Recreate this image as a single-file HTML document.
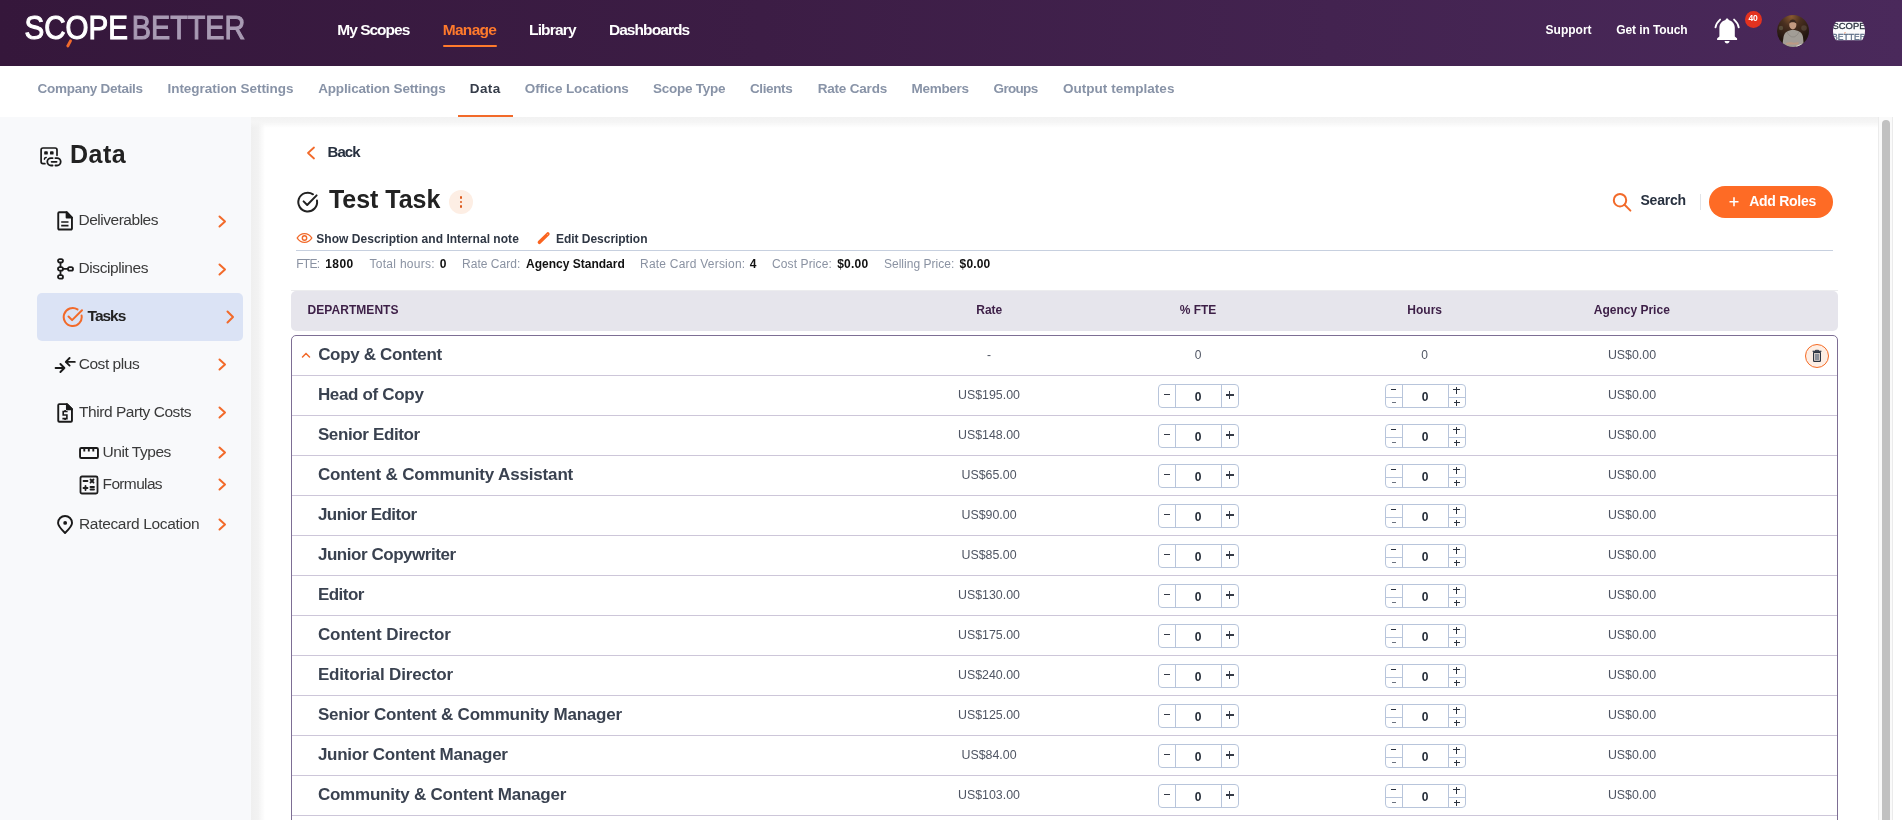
<!DOCTYPE html>
<html><head><meta charset="utf-8">
<style>
html,body{margin:0;padding:0;width:1902px;height:820px;overflow:hidden;background:#fff;font-family:"Liberation Sans",sans-serif;}
.t{position:absolute;line-height:1;white-space:nowrap;}
body{-webkit-font-smoothing:antialiased;}
#wrap{position:absolute;left:0;top:0;width:1902px;height:820px;will-change:transform;}
.abs{position:absolute;}
#hdr{position:absolute;left:0;top:0;width:1902px;height:66px;background:linear-gradient(90deg,#35173b 0%,#3c1d45 40%,#4a295b 100%);}
#sub{position:absolute;left:0;top:66px;width:1902px;height:51px;background:#fff;}
#side{position:absolute;left:0;top:117px;width:251px;height:703px;background:#f8f9fb;}
#shl{position:absolute;left:251px;top:117px;width:14px;height:703px;background:linear-gradient(90deg,#efefef 0px,#f2f2f2 7px,rgba(255,255,255,0) 14px);}
#sht{position:absolute;left:251px;top:117px;width:1627px;height:11px;background:linear-gradient(180deg,#f2f2f2 0px,#f5f5f5 5px,rgba(255,255,255,0) 11px);}
#track{position:absolute;left:1878px;top:117px;width:13px;height:703px;background:#fafafa;border-left:1px solid #ebebeb;border-right:1px solid #ebebeb;}
#thumb{position:absolute;left:1882px;top:120px;width:8px;height:710px;background:#c1c1c1;border-radius:4px;}
.rdiv{position:absolute;left:292px;width:1545px;height:1px;background:#cdc6d9;}
.step,.step2{position:absolute;width:79px;height:22px;border:1px solid #b8c5db;border-radius:4px;}
.step .c1,.step2 .c1{position:absolute;left:16px;top:0;width:1px;height:22px;background:#b8c5db;}
.step .c2{position:absolute;left:62px;top:0;width:1px;height:22px;background:#b8c5db;}
.step2 .c1{left:16px;}
.step2 .c2{position:absolute;left:62px;top:0;width:1px;height:22px;background:#b8c5db;}
.step2 .h1{position:absolute;left:0;top:12px;width:16px;height:1px;background:#b8c5db;}
.step2 .h2{position:absolute;left:63px;top:12px;width:16px;height:1px;background:#b8c5db;}
.mi{position:absolute;background:#2b3340;}
.pl{position:absolute;}
.pl::before,.pl::after{content:"";position:absolute;background:#2b3340;}
.step .mi{left:5px;top:9.1px;width:5.5px;height:1.3px;background:#353b47;}
.step .pl{left:67px;top:6px;width:8px;height:8px;}
.step .pl::before{left:0;top:3.4px;width:7.6px;height:1.2px;background:#353b47;}
.step .pl::after{left:3.2px;top:0;width:1.2px;height:8px;background:#353b47;}
.step2 .mi.a{left:5px;top:3.9px;width:5px;height:1.2px;}
.step2 .mi.b{left:6px;top:16.5px;width:4px;height:1px;background:#6b7280;}
.step2 .pl.a{left:67px;top:1.5px;width:7px;height:7px;}
.step2 .pl.b{left:67.5px;top:14.5px;width:6px;height:6px;}
.step2 .pl.a::before{left:0;top:2.9px;width:7px;height:1.1px;}
.step2 .pl.a::after{left:2.95px;top:0;width:1.1px;height:7.5px;}
.step2 .pl.b::before{left:0;top:2.5px;width:6px;height:1.1px;}
.step2 .pl.b::after{left:2.5px;top:0;width:1.1px;height:6px;}
</style></head>
<body><div id="wrap">
<div id="hdr"></div>
<!-- logo -->
<svg class="abs" style="left:0;top:0" width="260" height="66" viewBox="0 0 260 66">
  <text x="24.5" y="38.7" font-family="Liberation Sans" font-size="34" fill="#ffffff" stroke="#ffffff" stroke-width="1.1" textLength="103.6" lengthAdjust="spacingAndGlyphs">SCOPE</text>
  <text x="131.8" y="38.7" font-family="Liberation Sans" font-size="34" fill="#a99bb4" stroke="#a99bb4" stroke-width="1.1" textLength="113.5" lengthAdjust="spacingAndGlyphs">BETTER</text>
  <rect x="63" y="38" width="6" height="3.5" fill="#36183c"/>
  <line x1="70.5" y1="40.8" x2="67.8" y2="46" stroke="#f26b2c" stroke-width="2.8" stroke-linecap="round"/>
</svg>
<!-- manage underline -->
<div class="abs" style="left:443px;top:44.5px;width:54px;height:2.5px;background:#ff7a2c;border-radius:1px"></div>
<!-- bell -->
<svg class="abs" style="left:1713px;top:16px" width="30" height="30" viewBox="0 0 30 30">
  <path d="M14.1 2.4c-0.9 0-1.5 0.6-1.6 1.5C9 4.8 6.5 7.6 6.4 11.6V20.4L4.3 22.2a0.9 0.9 0 0 0-0.2 0.6V24H24.1V22.8a0.9 0.9 0 0 0-0.2-0.6L21.8 20.4V11.6C21.7 7.6 19.2 4.8 15.7 3.9C15.6 3 15 2.4 14.1 2.4z" fill="#fff"/>
  <path d="M11.6 25.1h4.9c0 1.4-1.1 2.5-2.45 2.5s-2.45-1.1-2.45-2.5z" fill="#fff"/>
  <path d="M7.1 3.6C4.6 5.8 3 8.4 2.5 11.4" stroke="#fff" stroke-width="1.9" fill="none" stroke-linecap="round"/>
  <path d="M21.1 3.6c2.5 2.2 4.1 4.8 4.6 7.8" stroke="#fff" stroke-width="1.9" fill="none" stroke-linecap="round"/>
</svg>
<div class="abs" style="left:1744.5px;top:10.5px;width:17px;height:17px;border-radius:50%;background:#e3321f;"></div>
<div class="t" style="left:1744.5px;width:17px;text-align:center;top:14px;font-size:8.5px;font-weight:bold;color:#fff;letter-spacing:-0.3px">40</div>
<!-- avatar -->
<svg class="abs" style="left:1777px;top:14.8px" width="32" height="32" viewBox="0 0 32 32">
  <defs><clipPath id="av"><circle cx="16" cy="16" r="16"/></clipPath>
  <radialGradient id="avg" cx="45%" cy="5%" r="75%"><stop offset="0" stop-color="#8a5a30"/><stop offset="0.4" stop-color="#4a3020"/><stop offset="1" stop-color="#231610"/></radialGradient></defs>
  <g clip-path="url(#av)">
    <rect width="32" height="32" fill="url(#avg)"/>
    <circle cx="4" cy="13" r="2.2" fill="#7a7a60" opacity="0.45"/>
    <circle cx="27" cy="13" r="2.8" fill="#6a5a4a" opacity="0.5"/>
    <path d="M5 33 L6.5 22 C7.5 17 11 15 16 15 C21 15 25 17 26 22 L27 33z" fill="#a29d96"/>
    <path d="M10 17c1.5 3 3.5 5 6 5s4.5-2 6-5" stroke="#8d8882" stroke-width="0.8" fill="none"/>
    <ellipse cx="15.8" cy="9.8" rx="3.6" ry="4.6" fill="#c39a80"/>
    <path d="M12.2 8.6c0-2.7 1.6-4.2 3.6-4.2s3.6 1.5 3.6 4.2c-0.9-0.9-2.1-1.4-3.6-1.4s-2.7 0.5-3.6 1.4z" fill="#3a281e"/>
    <path d="M9 28c2-0.8 4.5-1 6.5-0.6s4 0.3 6-0.3v2.4h-12.5z" fill="#c29a80" opacity="0.85"/>
    <path d="M19 31l5.5-2.2 1.8 1.8-5.5 2.6z" fill="#e6e2da" opacity="0.9"/>
  </g>
</svg>
<!-- company logo -->
<svg class="abs" style="left:1833px;top:14.8px" width="32" height="32" viewBox="0 0 32 32">
  <defs><clipPath id="cl"><circle cx="16" cy="16" r="16"/></clipPath></defs>
  <g clip-path="url(#cl)">
    <rect x="0" y="6.8" width="32" height="18.4" fill="#fbfbfc"/>
    <text x="-0.5" y="14.2" font-family="Liberation Sans" font-size="8.8" fill="#2c3340" stroke="#2c3340" stroke-width="0.3" textLength="33" lengthAdjust="spacingAndGlyphs">SCOPE</text>
    <text x="-1" y="25" font-family="Liberation Sans" font-size="9.6" fill="#5d6e86" stroke="#5d6e86" stroke-width="0.3" textLength="34" lengthAdjust="spacingAndGlyphs">BETTER</text>
    <path d="M12.2 17.2l-0.6 1.2" stroke="#f26b2c" stroke-width="0.9"/>
  </g>
</svg>
<div id="sub"></div>
<div class="abs" style="left:458px;top:115px;width:55px;height:2px;background:#f26a2a"></div>

<div id="side"></div>
<div id="shl"></div>
<div id="sht"></div>
<div id="track"></div>
<div id="thumb"></div>

<!-- sidebar icons -->
<svg class="abs" style="left:36px;top:142px" width="30" height="28" viewBox="0 0 30 28" fill="none" stroke="#1a1a1a" stroke-width="1.7" stroke-linecap="round">
  <path d="M8.9 21.7H7a1.9 1.9 0 0 1-1.9-1.9V7.9A1.9 1.9 0 0 1 7 6h12.1A1.9 1.9 0 0 1 21 7.9v5.4"/>
  <rect x="8.2" y="9.2" width="3.6" height="3.4" rx="0.9" fill="#1a1a1a" stroke="none"/>
  <rect x="14" y="9.2" width="3.6" height="3.4" rx="0.9" fill="#1a1a1a" stroke="none"/>
  <path d="M10.2 15.6a1.8 1.8 0 0 0-1.8 1.6" stroke-width="1.5"/>
  <path d="M16.6 16.1H15a3.7 3.7 0 0 0 0 7.4h1.6M19.4 16.1H21a3.7 3.7 0 0 1 0 7.4h-1.6M15.6 19.8h5" stroke-width="1.8"/>
</svg>
<div class="abs" style="left:37px;top:293px;width:206px;height:48px;background:#dbe3f5;border-radius:5px"></div>
<!-- deliverables doc -->
<svg class="abs" style="left:55px;top:209px" width="20" height="24" viewBox="0 0 20 24" fill="none" stroke="#1a1a1a" stroke-width="1.9" stroke-linejoin="round">
  <path d="M4.3 3.25H11.6L16.95 8.6V19.5a1.05 1.05 0 0 1-1.05 1.05H4.3a1.05 1.05 0 0 1-1.05-1.05V4.3a1.05 1.05 0 0 1 1.05-1.05z"/>
  <path d="M11.6 3.25V8.6H16.95z" fill="#1a1a1a"/>
  <path d="M6.2 13H13.5M6.2 16.6H13.5" stroke-width="1.7"/>
</svg>
<!-- disciplines tree -->
<svg class="abs" style="left:55px;top:256px" width="22" height="24" viewBox="0 0 22 24" fill="none" stroke="#1a1a1a" stroke-width="1.8">
  <rect x="3" y="3.1" width="5" height="3.4" rx="1.7"/>
  <rect x="3" y="11.2" width="5" height="3.4" rx="1.7"/>
  <rect x="3" y="19.2" width="5" height="3.4" rx="1.7"/>
  <rect x="13" y="11.2" width="5" height="3.4" rx="1.7"/>
  <path d="M5.5 6.5v4.7M5.5 14.6v4.6M8 12.9h5"/>
</svg>
<!-- tasks check -->
<svg class="abs" style="left:62px;top:306px" width="22" height="22" viewBox="0 0 22 22" fill="none" stroke="#f26a2a" stroke-width="2" stroke-linecap="round" stroke-linejoin="round">
  <path d="M19.6 9.6A9 9 0 1 1 15.5 3.4"/>
  <path d="M6.5 10.5l3.6 3.6L20 4.2"/>
</svg>
<!-- cost plus arrows -->
<svg class="abs" style="left:54px;top:355px" width="22" height="20" viewBox="0 0 22 20" fill="none" stroke="#1a1a1a" stroke-width="1.9" stroke-linecap="round" stroke-linejoin="round">
  <path d="M1.6 13H10.4M6.4 9L10.4 13L6.4 17"/>
  <path d="M20.8 6.9H11.8M15.6 3L11.8 6.9L15.6 10.6"/>
</svg>
<!-- third party doc dollar -->
<svg class="abs" style="left:55px;top:401px" width="20" height="24" viewBox="0 0 20 24" fill="none" stroke="#1a1a1a" stroke-width="1.9" stroke-linejoin="round">
  <path d="M4.3 3.15H11.9L16.95 8.2V19.7a1.05 1.05 0 0 1-1.05 1.05H4.3a1.05 1.05 0 0 1-1.05-1.05V4.2a1.05 1.05 0 0 1 1.05-1.05z"/>
  <path d="M11.9 3.15V8.2H16.95z" fill="#1a1a1a"/>
  <path d="M12.6 10.5H8.2V14H11.9V17.6H7.4M10.1 9V10.5M10.1 17.6V19" stroke-width="1.6" stroke-linejoin="miter"/>
</svg>
<!-- unit types ruler -->
<svg class="abs" style="left:78px;top:445px" width="22" height="16" viewBox="0 0 22 16" fill="none" stroke="#1a1a1a" stroke-width="1.9">
  <rect x="2.05" y="3.05" width="17.9" height="9.9" rx="1.3"/>
  <path d="M6.3 3v3.6M10.8 3v3.6M15.3 3v3.6"/>
</svg>
<!-- formulas calc -->
<svg class="abs" style="left:79px;top:475px" width="20" height="20" viewBox="0 0 20 20" fill="none" stroke="#1e1e1e" stroke-width="1.8" stroke-linecap="round">
  <rect x="1.5" y="1.5" width="17" height="17" rx="1.5"/>
  <path d="M4.5 6h4M11.5 4.5l3 3M14.5 4.5l-3 3M4.5 13h4M6.5 11v4M11.5 12h3.5M11.5 14.5h3.5"/>
</svg>
<!-- ratecard location pin -->
<svg class="abs" style="left:55px;top:513px" width="20" height="22" viewBox="0 0 20 22" fill="none" stroke="#1a1a1a" stroke-width="1.9" stroke-linejoin="round">
  <path d="M10.05 19.95C6 16 3.05 12.6 3.05 9.95a7 7 0 0 1 14 0c0 2.65-2.95 6.05-7 10z"/>
  <circle cx="10.15" cy="9.9" r="1.9" fill="#1a1a1a" stroke="none"/>
</svg>
<!-- sidebar chevrons -->
<svg class="abs" style="left:0;top:0" width="250" height="560" viewBox="0 0 250 560" fill="none" stroke="#f26a2a" stroke-width="2" stroke-linecap="round" stroke-linejoin="round">
  <path d="M219.5 216.5l5.5 5l-5.5 5"/>
  <path d="M219.5 264.5l5.5 5l-5.5 5"/>
  <path d="M227.5 311.5l5.5 5.5l-5.5 5.5"/>
  <path d="M219.5 359.5l5.5 5l-5.5 5"/>
  <path d="M219.5 407.5l5.5 5l-5.5 5"/>
  <path d="M219.5 447.5l5.5 5l-5.5 5"/>
  <path d="M219.5 479.5l5.5 5l-5.5 5"/>
  <path d="M219.5 519.5l5.5 5l-5.5 5"/>
</svg>

<!-- main: back chevron -->
<svg class="abs" style="left:300px;top:140px" width="20" height="24" viewBox="0 0 20 24" fill="none" stroke="#f26a2a" stroke-width="1.8" stroke-linecap="round" stroke-linejoin="round">
  <path d="M14 7.5l-6 5.5l6 5.5"/>
</svg>
<!-- title check -->
<svg class="abs" style="left:296px;top:190px" width="24" height="24" viewBox="0 0 24 24" fill="none" stroke="#222" stroke-width="2" stroke-linecap="round" stroke-linejoin="round">
  <path d="M21 10.6A9.4 9.4 0 1 1 17 4.3"/>
  <path d="M7.6 11.4l3.6 3.6L20.6 5.4"/>
</svg>
<!-- dots button -->
<div class="abs" style="left:449px;top:190px;width:24px;height:24px;border-radius:50%;background:#fdeee4"></div>
<div class="abs" style="left:459.6px;top:196.4px;width:2.6px;height:2.6px;border-radius:50%;background:#dc5a1c"></div>
<div class="abs" style="left:459.6px;top:200.6px;width:2.6px;height:2.6px;border-radius:50%;background:#dc5a1c"></div>
<div class="abs" style="left:459.6px;top:205.2px;width:2.6px;height:2.6px;border-radius:50%;background:#dc5a1c"></div>
<!-- eye -->
<svg class="abs" style="left:296px;top:231px" width="17" height="14" viewBox="0 0 17 14" fill="none" stroke="#f26a2a" stroke-width="1.4">
  <path d="M1.2 7C3 4 5.5 2.6 8.5 2.6S14 4 15.8 7C14 10 11.5 11.4 8.5 11.4S3 10 1.2 7z"/>
  <circle cx="8.5" cy="7" r="2.2"/>
</svg>
<!-- pencil -->
<svg class="abs" style="left:536px;top:231px" width="15" height="14" viewBox="0 0 15 14" fill="none" stroke-linecap="round">
  <path d="M3.4 11.3L11.9 2.9" stroke="#fa6420" stroke-width="3.5"/>
  <circle cx="11.4" cy="3.4" r="0.5" fill="#ffb58c"/>
</svg>
<div class="abs" style="left:296px;top:250px;width:1537px;height:1px;background:#c7d0df"></div>
<!-- search -->
<svg class="abs" style="left:1610px;top:190px" width="24" height="24" viewBox="0 0 24 24" fill="none" stroke="#f26a2a" stroke-width="2" stroke-linecap="round">
  <circle cx="10" cy="10.2" r="6.2"/>
  <path d="M14.6 14.8l5.8 5.8"/>
</svg>
<div class="abs" style="left:1700px;top:194px;width:1px;height:16px;background:#e2e4e8"></div>
<div class="abs" style="left:1709px;top:186px;width:124px;height:32px;border-radius:16px;background:#fe6b25"></div>
<svg class="abs" style="left:1727px;top:195px" width="14" height="14" viewBox="0 0 14 14" stroke="#fff" stroke-width="1.6">
  <path d="M2.5 6.8h9M7 2.3v9"/>
</svg>

<!-- table header -->
<div class="abs" style="left:291px;top:290px;width:1547px;height:1px;background:#ececee"></div>
<div class="abs" style="left:291px;top:290.5px;width:1547px;height:40.5px;background:#e6e5ec;border-radius:5px"></div>
<!-- group box -->
<div class="abs" style="left:291px;top:335px;width:1545px;height:520px;border:1px solid #7d6e94;border-radius:5px"></div>
<svg class="abs" style="left:300px;top:349px" width="12" height="10" viewBox="0 0 12 10" fill="none" stroke="#f26a2a" stroke-width="1.5" stroke-linecap="round">
  <path d="M2.5 8l3.5-3.5L9.5 8"/>
</svg>
<!-- trash button -->
<div class="abs" style="left:1805px;top:344px;width:22px;height:22px;border-radius:50%;border:1px solid #f56a24;background:#fdeee4"></div>
<svg class="abs" style="left:1809px;top:348px" width="16" height="16" viewBox="0 0 16 16">
  <path d="M3.6 3.3h8.8" stroke="#2b3340" stroke-width="1.2"/>
  <path d="M6.5 3.2v-0.9h3v0.9" stroke="#2b3340" stroke-width="1" fill="none"/>
  <rect x="4.6" y="4.4" width="6.8" height="9" rx="0.6" fill="none" stroke="#2b3340" stroke-width="1.2"/>
  <rect x="6" y="5.6" width="4" height="6.6" fill="#8a8f99"/>
</svg>
<div class="rdiv" style="top:375px"></div>
<div class="rdiv" style="top:415px"></div>
<div class="rdiv" style="top:455px"></div>
<div class="rdiv" style="top:495px"></div>
<div class="rdiv" style="top:535px"></div>
<div class="rdiv" style="top:575px"></div>
<div class="rdiv" style="top:615px"></div>
<div class="rdiv" style="top:655px"></div>
<div class="rdiv" style="top:695px"></div>
<div class="rdiv" style="top:735px"></div>
<div class="rdiv" style="top:775px"></div>
<div class="rdiv" style="top:815px"></div>
<div class="step" style="left:1158px;top:384px"><div class="c1"></div><div class="c2"></div><span class="mi"></span><span class="pl"></span></div>
<div class="step2" style="left:1385px;top:384px"><div class="c1"></div><div class="c2"></div><div class="h1"></div><div class="h2"></div><span class="mi a"></span><span class="mi b"></span><span class="pl a"></span><span class="pl b"></span></div>
<div class="step" style="left:1158px;top:424px"><div class="c1"></div><div class="c2"></div><span class="mi"></span><span class="pl"></span></div>
<div class="step2" style="left:1385px;top:424px"><div class="c1"></div><div class="c2"></div><div class="h1"></div><div class="h2"></div><span class="mi a"></span><span class="mi b"></span><span class="pl a"></span><span class="pl b"></span></div>
<div class="step" style="left:1158px;top:464px"><div class="c1"></div><div class="c2"></div><span class="mi"></span><span class="pl"></span></div>
<div class="step2" style="left:1385px;top:464px"><div class="c1"></div><div class="c2"></div><div class="h1"></div><div class="h2"></div><span class="mi a"></span><span class="mi b"></span><span class="pl a"></span><span class="pl b"></span></div>
<div class="step" style="left:1158px;top:504px"><div class="c1"></div><div class="c2"></div><span class="mi"></span><span class="pl"></span></div>
<div class="step2" style="left:1385px;top:504px"><div class="c1"></div><div class="c2"></div><div class="h1"></div><div class="h2"></div><span class="mi a"></span><span class="mi b"></span><span class="pl a"></span><span class="pl b"></span></div>
<div class="step" style="left:1158px;top:544px"><div class="c1"></div><div class="c2"></div><span class="mi"></span><span class="pl"></span></div>
<div class="step2" style="left:1385px;top:544px"><div class="c1"></div><div class="c2"></div><div class="h1"></div><div class="h2"></div><span class="mi a"></span><span class="mi b"></span><span class="pl a"></span><span class="pl b"></span></div>
<div class="step" style="left:1158px;top:584px"><div class="c1"></div><div class="c2"></div><span class="mi"></span><span class="pl"></span></div>
<div class="step2" style="left:1385px;top:584px"><div class="c1"></div><div class="c2"></div><div class="h1"></div><div class="h2"></div><span class="mi a"></span><span class="mi b"></span><span class="pl a"></span><span class="pl b"></span></div>
<div class="step" style="left:1158px;top:624px"><div class="c1"></div><div class="c2"></div><span class="mi"></span><span class="pl"></span></div>
<div class="step2" style="left:1385px;top:624px"><div class="c1"></div><div class="c2"></div><div class="h1"></div><div class="h2"></div><span class="mi a"></span><span class="mi b"></span><span class="pl a"></span><span class="pl b"></span></div>
<div class="step" style="left:1158px;top:664px"><div class="c1"></div><div class="c2"></div><span class="mi"></span><span class="pl"></span></div>
<div class="step2" style="left:1385px;top:664px"><div class="c1"></div><div class="c2"></div><div class="h1"></div><div class="h2"></div><span class="mi a"></span><span class="mi b"></span><span class="pl a"></span><span class="pl b"></span></div>
<div class="step" style="left:1158px;top:704px"><div class="c1"></div><div class="c2"></div><span class="mi"></span><span class="pl"></span></div>
<div class="step2" style="left:1385px;top:704px"><div class="c1"></div><div class="c2"></div><div class="h1"></div><div class="h2"></div><span class="mi a"></span><span class="mi b"></span><span class="pl a"></span><span class="pl b"></span></div>
<div class="step" style="left:1158px;top:744px"><div class="c1"></div><div class="c2"></div><span class="mi"></span><span class="pl"></span></div>
<div class="step2" style="left:1385px;top:744px"><div class="c1"></div><div class="c2"></div><div class="h1"></div><div class="h2"></div><span class="mi a"></span><span class="mi b"></span><span class="pl a"></span><span class="pl b"></span></div>
<div class="step" style="left:1158px;top:784px"><div class="c1"></div><div class="c2"></div><span class="mi"></span><span class="pl"></span></div>
<div class="step2" style="left:1385px;top:784px"><div class="c1"></div><div class="c2"></div><div class="h1"></div><div class="h2"></div><span class="mi a"></span><span class="mi b"></span><span class="pl a"></span><span class="pl b"></span></div>
<div class="t" style="top:22.03px;font-size:15.5px;font-weight:bold;color:#ffffff;letter-spacing:-0.997px;left:337.30px;">My Scopes</div>
<div class="t" style="top:22.03px;font-size:15.5px;font-weight:bold;color:#ff7a2c;letter-spacing:-0.682px;left:442.70px;">Manage</div>
<div class="t" style="top:22.03px;font-size:15.5px;font-weight:bold;color:#ffffff;letter-spacing:-0.825px;left:529.00px;">Library</div>
<div class="t" style="top:22.03px;font-size:15.5px;font-weight:bold;color:#ffffff;letter-spacing:-0.920px;left:608.90px;">Dashboards</div>
<div class="t" style="top:23.70px;font-size:12px;font-weight:bold;color:#ffffff;letter-spacing:0.002px;left:1545.60px;">Support</div>
<div class="t" style="top:23.70px;font-size:12px;font-weight:bold;color:#ffffff;letter-spacing:-0.085px;left:1616.20px;">Get in Touch</div>
<div class="t" style="top:81.83px;font-size:13.5px;font-weight:bold;color:#8893a7;letter-spacing:-0.288px;left:37.60px;">Company Details</div>
<div class="t" style="top:81.83px;font-size:13.5px;font-weight:bold;color:#8893a7;letter-spacing:-0.040px;left:167.50px;">Integration Settings</div>
<div class="t" style="top:81.83px;font-size:13.5px;font-weight:bold;color:#8893a7;letter-spacing:-0.158px;left:318.20px;">Application Settings</div>
<div class="t" style="top:81.83px;font-size:13.5px;font-weight:bold;color:#363d4a;letter-spacing:0.446px;left:469.70px;">Data</div>
<div class="t" style="top:81.83px;font-size:13.5px;font-weight:bold;color:#8893a7;letter-spacing:-0.118px;left:524.80px;">Office Locations</div>
<div class="t" style="top:81.83px;font-size:13.5px;font-weight:bold;color:#8893a7;letter-spacing:-0.252px;left:653.00px;">Scope Type</div>
<div class="t" style="top:81.83px;font-size:13.5px;font-weight:bold;color:#8893a7;letter-spacing:-0.385px;left:750.00px;">Clients</div>
<div class="t" style="top:81.83px;font-size:13.5px;font-weight:bold;color:#8893a7;letter-spacing:-0.197px;left:817.70px;">Rate Cards</div>
<div class="t" style="top:81.83px;font-size:13.5px;font-weight:bold;color:#8893a7;letter-spacing:-0.312px;left:911.60px;">Members</div>
<div class="t" style="top:81.83px;font-size:13.5px;font-weight:bold;color:#8893a7;letter-spacing:-0.680px;left:993.60px;">Groups</div>
<div class="t" style="top:81.83px;font-size:13.5px;font-weight:bold;color:#8893a7;letter-spacing:0.026px;left:1063.00px;">Output templates</div>
<div class="t" style="top:141.55px;font-size:25px;font-weight:bold;color:#222222;letter-spacing:0.471px;left:70.00px;">Data</div>
<div class="t" style="top:212.02px;font-size:15.5px;font-weight:normal;color:#3a3a3a;letter-spacing:-0.481px;left:78.50px;">Deliverables</div>
<div class="t" style="top:260.22px;font-size:15.5px;font-weight:normal;color:#3a3a3a;letter-spacing:-0.408px;left:78.50px;">Disciplines</div>
<div class="t" style="top:307.82px;font-size:15.5px;font-weight:bold;color:#222222;letter-spacing:-1.025px;left:87.60px;">Tasks</div>
<div class="t" style="top:355.82px;font-size:15.5px;font-weight:normal;color:#3a3a3a;letter-spacing:-0.451px;left:78.70px;">Cost plus</div>
<div class="t" style="top:404.22px;font-size:15.5px;font-weight:normal;color:#3a3a3a;letter-spacing:-0.451px;left:79.00px;">Third Party Costs</div>
<div class="t" style="top:443.93px;font-size:15.5px;font-weight:normal;color:#3a3a3a;letter-spacing:-0.469px;left:102.60px;">Unit Types</div>
<div class="t" style="top:475.72px;font-size:15.5px;font-weight:normal;color:#3a3a3a;letter-spacing:-0.657px;left:102.60px;">Formulas</div>
<div class="t" style="top:516.33px;font-size:15.5px;font-weight:normal;color:#3a3a3a;letter-spacing:-0.325px;left:79.00px;">Ratecard Location</div>
<div class="t" style="top:144.15px;font-size:15px;font-weight:bold;color:#27303f;letter-spacing:-0.953px;left:327.60px;">Back</div>
<div class="t" style="top:186.55px;font-size:25px;font-weight:bold;color:#222222;letter-spacing:-0.015px;left:328.90px;">Test Task</div>
<div class="t" style="top:233.30px;font-size:12px;font-weight:bold;color:#2f3744;letter-spacing:0.035px;left:316.30px;">Show Description and Internal note</div>
<div class="t" style="top:233.30px;font-size:12px;font-weight:bold;color:#2f3744;letter-spacing:-0.034px;left:556.00px;">Edit Description</div>
<div class="t" style="top:257.90px;font-size:12px;font-weight:normal;color:#8a92a2;letter-spacing:-0.766px;left:296.30px;">FTE:</div>
<div class="t" style="top:257.90px;font-size:12px;font-weight:bold;color:#111111;letter-spacing:0.368px;left:325.30px;">1800</div>
<div class="t" style="top:257.90px;font-size:12px;font-weight:normal;color:#8a92a2;letter-spacing:0.288px;left:369.50px;">Total hours:</div>
<div class="t" style="top:257.90px;font-size:12px;font-weight:bold;color:#111111;left:439.70px;">0</div>
<div class="t" style="top:257.90px;font-size:12px;font-weight:normal;color:#8a92a2;letter-spacing:0.031px;left:462.00px;">Rate Card:</div>
<div class="t" style="top:257.90px;font-size:12px;font-weight:bold;color:#111111;letter-spacing:0.008px;left:526.00px;">Agency Standard</div>
<div class="t" style="top:257.90px;font-size:12px;font-weight:normal;color:#8a92a2;letter-spacing:0.219px;left:640.00px;">Rate Card Version:</div>
<div class="t" style="top:257.90px;font-size:12px;font-weight:bold;color:#111111;left:749.70px;">4</div>
<div class="t" style="top:257.90px;font-size:12px;font-weight:normal;color:#8a92a2;letter-spacing:0.112px;left:772.00px;">Cost Price:</div>
<div class="t" style="top:257.90px;font-size:12px;font-weight:bold;color:#111111;letter-spacing:0.218px;left:837.20px;">$0.00</div>
<div class="t" style="top:257.90px;font-size:12px;font-weight:normal;color:#8a92a2;letter-spacing:0.036px;left:883.90px;">Selling Price:</div>
<div class="t" style="top:257.90px;font-size:12px;font-weight:bold;color:#111111;letter-spacing:0.118px;left:959.60px;">$0.00</div>
<div class="t" style="top:192.80px;font-size:14px;font-weight:bold;color:#27303f;letter-spacing:-0.219px;left:1640.50px;">Search</div>
<div class="t" style="top:193.70px;font-size:14px;font-weight:bold;color:#ffffff;letter-spacing:-0.278px;left:1749.20px;">Add Roles</div>
<div class="t" style="top:303.80px;font-size:12px;font-weight:bold;color:#3d1f47;letter-spacing:0.055px;left:307.50px;">DEPARTMENTS</div>
<div class="t" style="top:303.80px;font-size:12px;font-weight:bold;color:#3d1f47;left:839.30px;width:300px;text-align:center;">Rate</div>
<div class="t" style="top:303.80px;font-size:12px;font-weight:bold;color:#3d1f47;left:1048.00px;width:300px;text-align:center;">% FTE</div>
<div class="t" style="top:303.80px;font-size:12px;font-weight:bold;color:#3d1f47;left:1274.70px;width:300px;text-align:center;">Hours</div>
<div class="t" style="top:303.80px;font-size:12px;font-weight:bold;color:#3d1f47;left:1481.80px;width:300px;text-align:center;">Agency Price</div>
<div class="t" style="top:346.05px;font-size:17px;font-weight:bold;color:#3a4250;letter-spacing:-0.341px;left:318.20px;">Copy &amp; Content</div>
<div class="t" style="top:349.00px;font-size:12px;font-weight:normal;color:#4f5563;left:839.00px;width:300px;text-align:center;">-</div>
<div class="t" style="top:349.00px;font-size:12px;font-weight:normal;color:#4f5563;left:1048.00px;width:300px;text-align:center;">0</div>
<div class="t" style="top:349.00px;font-size:12px;font-weight:normal;color:#4f5563;left:1274.70px;width:300px;text-align:center;">0</div>
<div class="t" style="top:348.66px;font-size:12.4px;font-weight:normal;color:#4f5563;left:1482.00px;width:300px;text-align:center;">US$0.00</div>
<div class="t" style="top:386.35px;font-size:17px;font-weight:bold;color:#3a4250;letter-spacing:-0.324px;left:317.90px;">Head of Copy</div>
<div class="t" style="top:388.56px;font-size:12.4px;font-weight:normal;color:#4f5563;left:839.00px;width:300px;text-align:center;">US$195.00</div>
<div class="t" style="top:390.70px;font-size:12px;font-weight:bold;color:#222a36;left:1048.00px;width:300px;text-align:center;">0</div>
<div class="t" style="top:390.60px;font-size:12px;font-weight:bold;color:#222a36;left:1275.00px;width:300px;text-align:center;">0</div>
<div class="t" style="top:388.56px;font-size:12.4px;font-weight:normal;color:#4f5563;left:1482.00px;width:300px;text-align:center;">US$0.00</div>
<div class="t" style="top:426.35px;font-size:17px;font-weight:bold;color:#3a4250;letter-spacing:-0.369px;left:317.90px;">Senior Editor</div>
<div class="t" style="top:428.56px;font-size:12.4px;font-weight:normal;color:#4f5563;left:839.00px;width:300px;text-align:center;">US$148.00</div>
<div class="t" style="top:430.70px;font-size:12px;font-weight:bold;color:#222a36;left:1048.00px;width:300px;text-align:center;">0</div>
<div class="t" style="top:430.60px;font-size:12px;font-weight:bold;color:#222a36;left:1275.00px;width:300px;text-align:center;">0</div>
<div class="t" style="top:428.56px;font-size:12.4px;font-weight:normal;color:#4f5563;left:1482.00px;width:300px;text-align:center;">US$0.00</div>
<div class="t" style="top:466.35px;font-size:17px;font-weight:bold;color:#3a4250;letter-spacing:-0.167px;left:317.90px;">Content &amp; Community Assistant</div>
<div class="t" style="top:468.56px;font-size:12.4px;font-weight:normal;color:#4f5563;left:839.00px;width:300px;text-align:center;">US$65.00</div>
<div class="t" style="top:470.70px;font-size:12px;font-weight:bold;color:#222a36;left:1048.00px;width:300px;text-align:center;">0</div>
<div class="t" style="top:470.60px;font-size:12px;font-weight:bold;color:#222a36;left:1275.00px;width:300px;text-align:center;">0</div>
<div class="t" style="top:468.56px;font-size:12.4px;font-weight:normal;color:#4f5563;left:1482.00px;width:300px;text-align:center;">US$0.00</div>
<div class="t" style="top:506.35px;font-size:17px;font-weight:bold;color:#3a4250;letter-spacing:-0.548px;left:317.90px;">Junior Editor</div>
<div class="t" style="top:508.56px;font-size:12.4px;font-weight:normal;color:#4f5563;left:839.00px;width:300px;text-align:center;">US$90.00</div>
<div class="t" style="top:510.70px;font-size:12px;font-weight:bold;color:#222a36;left:1048.00px;width:300px;text-align:center;">0</div>
<div class="t" style="top:510.60px;font-size:12px;font-weight:bold;color:#222a36;left:1275.00px;width:300px;text-align:center;">0</div>
<div class="t" style="top:508.56px;font-size:12.4px;font-weight:normal;color:#4f5563;left:1482.00px;width:300px;text-align:center;">US$0.00</div>
<div class="t" style="top:546.35px;font-size:17px;font-weight:bold;color:#3a4250;letter-spacing:-0.454px;left:317.90px;">Junior Copywriter</div>
<div class="t" style="top:548.56px;font-size:12.4px;font-weight:normal;color:#4f5563;left:839.00px;width:300px;text-align:center;">US$85.00</div>
<div class="t" style="top:550.70px;font-size:12px;font-weight:bold;color:#222a36;left:1048.00px;width:300px;text-align:center;">0</div>
<div class="t" style="top:550.60px;font-size:12px;font-weight:bold;color:#222a36;left:1275.00px;width:300px;text-align:center;">0</div>
<div class="t" style="top:548.56px;font-size:12.4px;font-weight:normal;color:#4f5563;left:1482.00px;width:300px;text-align:center;">US$0.00</div>
<div class="t" style="top:586.35px;font-size:17px;font-weight:bold;color:#3a4250;letter-spacing:-0.521px;left:317.90px;">Editor</div>
<div class="t" style="top:588.56px;font-size:12.4px;font-weight:normal;color:#4f5563;left:839.00px;width:300px;text-align:center;">US$130.00</div>
<div class="t" style="top:590.70px;font-size:12px;font-weight:bold;color:#222a36;left:1048.00px;width:300px;text-align:center;">0</div>
<div class="t" style="top:590.60px;font-size:12px;font-weight:bold;color:#222a36;left:1275.00px;width:300px;text-align:center;">0</div>
<div class="t" style="top:588.56px;font-size:12.4px;font-weight:normal;color:#4f5563;left:1482.00px;width:300px;text-align:center;">US$0.00</div>
<div class="t" style="top:626.35px;font-size:17px;font-weight:bold;color:#3a4250;letter-spacing:-0.074px;left:317.90px;">Content Director</div>
<div class="t" style="top:628.56px;font-size:12.4px;font-weight:normal;color:#4f5563;left:839.00px;width:300px;text-align:center;">US$175.00</div>
<div class="t" style="top:630.70px;font-size:12px;font-weight:bold;color:#222a36;left:1048.00px;width:300px;text-align:center;">0</div>
<div class="t" style="top:630.60px;font-size:12px;font-weight:bold;color:#222a36;left:1275.00px;width:300px;text-align:center;">0</div>
<div class="t" style="top:628.56px;font-size:12.4px;font-weight:normal;color:#4f5563;left:1482.00px;width:300px;text-align:center;">US$0.00</div>
<div class="t" style="top:666.35px;font-size:17px;font-weight:bold;color:#3a4250;letter-spacing:-0.160px;left:317.90px;">Editorial Director</div>
<div class="t" style="top:668.56px;font-size:12.4px;font-weight:normal;color:#4f5563;left:839.00px;width:300px;text-align:center;">US$240.00</div>
<div class="t" style="top:670.70px;font-size:12px;font-weight:bold;color:#222a36;left:1048.00px;width:300px;text-align:center;">0</div>
<div class="t" style="top:670.60px;font-size:12px;font-weight:bold;color:#222a36;left:1275.00px;width:300px;text-align:center;">0</div>
<div class="t" style="top:668.56px;font-size:12.4px;font-weight:normal;color:#4f5563;left:1482.00px;width:300px;text-align:center;">US$0.00</div>
<div class="t" style="top:706.35px;font-size:17px;font-weight:bold;color:#3a4250;letter-spacing:-0.227px;left:317.90px;">Senior Content &amp; Community Manager</div>
<div class="t" style="top:708.56px;font-size:12.4px;font-weight:normal;color:#4f5563;left:839.00px;width:300px;text-align:center;">US$125.00</div>
<div class="t" style="top:710.70px;font-size:12px;font-weight:bold;color:#222a36;left:1048.00px;width:300px;text-align:center;">0</div>
<div class="t" style="top:710.60px;font-size:12px;font-weight:bold;color:#222a36;left:1275.00px;width:300px;text-align:center;">0</div>
<div class="t" style="top:708.56px;font-size:12.4px;font-weight:normal;color:#4f5563;left:1482.00px;width:300px;text-align:center;">US$0.00</div>
<div class="t" style="top:746.35px;font-size:17px;font-weight:bold;color:#3a4250;letter-spacing:-0.258px;left:317.90px;">Junior Content Manager</div>
<div class="t" style="top:748.56px;font-size:12.4px;font-weight:normal;color:#4f5563;left:839.00px;width:300px;text-align:center;">US$84.00</div>
<div class="t" style="top:750.70px;font-size:12px;font-weight:bold;color:#222a36;left:1048.00px;width:300px;text-align:center;">0</div>
<div class="t" style="top:750.60px;font-size:12px;font-weight:bold;color:#222a36;left:1275.00px;width:300px;text-align:center;">0</div>
<div class="t" style="top:748.56px;font-size:12.4px;font-weight:normal;color:#4f5563;left:1482.00px;width:300px;text-align:center;">US$0.00</div>
<div class="t" style="top:786.35px;font-size:17px;font-weight:bold;color:#3a4250;letter-spacing:-0.214px;left:317.90px;">Community &amp; Content Manager</div>
<div class="t" style="top:788.56px;font-size:12.4px;font-weight:normal;color:#4f5563;left:839.00px;width:300px;text-align:center;">US$103.00</div>
<div class="t" style="top:790.70px;font-size:12px;font-weight:bold;color:#222a36;left:1048.00px;width:300px;text-align:center;">0</div>
<div class="t" style="top:790.60px;font-size:12px;font-weight:bold;color:#222a36;left:1275.00px;width:300px;text-align:center;">0</div>
<div class="t" style="top:788.56px;font-size:12.4px;font-weight:normal;color:#4f5563;left:1482.00px;width:300px;text-align:center;">US$0.00</div>
</div></body></html>
